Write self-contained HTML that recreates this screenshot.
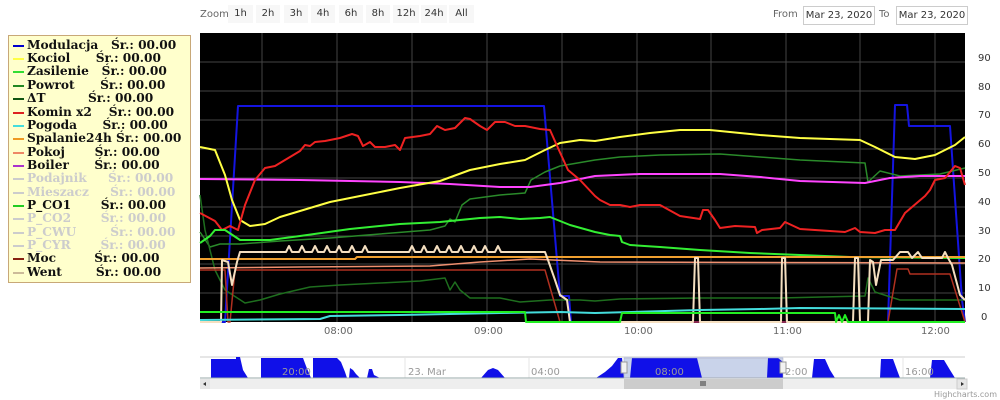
<!DOCTYPE html>
<html><head><meta charset="utf-8"><style>
body{margin:0;width:1000px;height:400px;background:#fff;position:relative;overflow:hidden;font-family:"DejaVu Sans","Liberation Sans",sans-serif}
.btn{position:absolute;top:5px;height:18px;background:#f7f7f7;font-size:10px;color:#333;line-height:18px;text-align:center}
.lbl{position:absolute;font-size:10px;color:#666}
.inp{position:absolute;top:6px;height:17px;border:1px solid #ccc;font-size:10px;color:#333;line-height:17px;text-align:center;background:#fff}
#leg{position:absolute;left:8px;top:35px;width:181px;height:246px;background:#ffffcc;border:1px solid #c8a878;font-family:"DejaVu Serif","Liberation Serif",serif;font-weight:bold;font-size:12.2px}
.r{position:absolute;left:4px;height:13px;line-height:13px;white-space:pre;color:#111}
.r i{display:inline-block;width:11px;height:2px;vertical-align:middle;margin-right:3px}
.g{color:#ccc}
.yl{position:absolute;left:978px;font-size:10px;color:#333}
.xl{position:absolute;top:326px;font-size:10px;color:#666}
</style></head><body>
<div class="lbl" style="left:200px;top:9px">Zoom</div>
<div class="btn" style="left:228px;width:25px">1h</div>
<div class="btn" style="left:256px;width:24px">2h</div>
<div class="btn" style="left:284px;width:24px">3h</div>
<div class="btn" style="left:311px;width:24px">4h</div>
<div class="btn" style="left:339px;width:24px">6h</div>
<div class="btn" style="left:366px;width:24px">8h</div>
<div class="btn" style="left:393px;width:26px">12h</div>
<div class="btn" style="left:421px;width:26px">24h</div>
<div class="btn" style="left:449px;width:25px">All</div>
<div class="lbl" style="left:773px;top:9px">From</div>
<div class="inp" style="left:803px;width:70px">Mar 23, 2020</div>
<div class="lbl" style="left:879px;top:9px">To</div>
<div class="inp" style="left:896px;width:70px">Mar 23, 2020</div>

<div id="leg">
<div class="r" style="top:3px"><i style="background:#0000cc"></i>Modulacja   Śr.: 00.00</div>
<div class="r" style="top:16px"><i style="background:#ffff44"></i>Kociol      Śr.: 00.00</div>
<div class="r" style="top:29px"><i style="background:#33dd33"></i>Zasilenie   Śr.: 00.00</div>
<div class="r" style="top:43px"><i style="background:#228822"></i>Powrot      Śr.: 00.00</div>
<div class="r" style="top:56px"><i style="background:#115511"></i>ΔT          Śr.: 00.00</div>
<div class="r" style="top:70px"><i style="background:#dd2222"></i>Komin x2    Śr.: 00.00</div>
<div class="r" style="top:83px"><i style="background:#44dddd"></i>Pogoda      Śr.: 00.00</div>
<div class="r" style="top:96px"><i style="background:#ee9922"></i>Spalanie24h Śr.: 00.00</div>
<div class="r" style="top:110px"><i style="background:#ee8866"></i>Pokoj       Śr.: 00.00</div>
<div class="r" style="top:123px"><i style="background:#aa33cc"></i>Boiler      Śr.: 00.00</div>
<div class="r g" style="top:136px"><i style="background:#ccc"></i>Podajnik     Śr.: 00.00</div>
<div class="r g" style="top:150px"><i style="background:#ccc"></i>Mieszacz     Śr.: 00.00</div>
<div class="r" style="top:163px"><i style="background:#22cc22"></i>P_CO1       Śr.: 00.00</div>
<div class="r g" style="top:176px"><i style="background:#ccc"></i>P_CO2       Śr.: 00.00</div>
<div class="r g" style="top:190px"><i style="background:#ccc"></i>P_CWU        Śr.: 00.00</div>
<div class="r g" style="top:203px"><i style="background:#ccc"></i>P_CYR       Śr.: 00.00</div>
<div class="r" style="top:216px"><i style="background:#882211"></i>Moc         Śr.: 00.00</div>
<div class="r" style="top:230px"><i style="background:#ccbb99"></i>Went        Śr.: 00.00</div>
</div>

<svg width="1000" height="400" style="position:absolute;left:0;top:0" fill="none">
<rect x="200" y="33" width="765" height="289" fill="#000"/>
<g stroke="#444" stroke-width="1">
<path d="M262 33V322M337 33V322M412 33V322M487 33V322M562 33V322M637 33V322M711 33V322M786 33V322M860 33V322M935 33V322"/>
<path d="M200 62H965M200 91H965M200 120H965M200 149H965M200 178H965M200 207H965M200 236H965M200 264H965M200 293H965"/>
</g>
<g stroke-width="2" stroke-linejoin="round">
<polyline stroke="#1414e0" points="200,322 225,322 238,106 544,106 560,296 569,296 571,322 888,322 895,105 907,105 909,126 950,126 962,300 965,322"/>
<polyline stroke="#2a8a2a" stroke-width="1.5" points="200,232 210,247 220,244 240,244 280,241 330,238 380,234 430,230 445,226 450,219 455,222 462,205 470,199 500,195 525,193 531,180 545,172 560,166 595,160 620,157 660,155 720,154 760,157 800,160 865,163 868,182 880,171 900,176 940,174 965,168"/>
<polyline stroke="#1e6e1e" stroke-width="1.5" points="200,195 205,230 215,270 225,290 245,303 260,300 280,294 310,287 340,285 380,283 420,281 445,278 450,290 455,282 460,290 470,298 500,298 520,302 550,300 580,300 595,301 620,299 700,298 780,298 865,296 868,278 875,292 900,300 965,300"/>
<polyline stroke="#ff44ff" points="200,179 300,180 400,182 450,184 500,187 530,187 560,183 595,176 640,174 720,174 760,177 800,181 865,183 890,178 920,176 965,176"/>
<polyline stroke="#ffff44" points="200,147 215,150 225,175 232,200 240,220 250,226 265,224 280,217 300,211 330,202 360,196 400,188 440,181 470,170 500,164 525,160 545,150 560,143 580,140 595,141 620,137 650,133 680,130 710,130 760,135 800,138 860,140 875,147 895,157 915,159 935,155 955,145 965,137"/>
<polyline stroke="#ee2222" points="200,213 215,221 222,230 230,226 238,230 245,205 255,180 265,168 275,166 285,160 300,151 305,145 310,146 315,142 325,141 340,138 352,134 358,136 363,146 370,142 375,147 385,147 395,145 400,150 405,138 420,136 430,134 437,126 445,130 455,128 465,118 470,119 480,126 487,130 495,122 505,122 515,126 525,126 540,129 550,130 558,148 568,170 580,180 595,196 600,200 610,205 620,205 630,207 640,205 660,205 680,216 700,219 703,210 708,210 715,220 720,228 735,226 755,227 757,233 762,230 780,228 785,222 800,229 830,231 845,232 855,228 860,232 875,233 885,230 895,230 905,213 925,196 930,190 935,180 945,178 955,166 960,168 965,185"/>
<polyline stroke="#33ee33" points="200,243 210,236 215,230 225,230 240,240 270,240 300,236 350,229 400,224 440,222 480,218 500,217 520,219 540,218 550,217 570,225 595,232 610,235 620,236 622,242 630,245 660,247 700,250 750,253 800,255 850,257 965,258"/>
<polyline stroke="#f0a030" points="200,259 355,259 357,257 965,257"/>
<polyline stroke="#f09070" stroke-width="1.5" points="200,268 300,267 430,266 480,262 530,259 600,262 965,263"/>
<polyline stroke="#b03020" stroke-width="1.5" points="200,270 225,270 228,322 230,322 235,270 545,270 560,322 888,322 897,269 908,269 910,274 950,274 965,322"/>
<polyline stroke="#f5dfc0" points="200,322 221,322 222,260 228,262 232,285 237,262 240,252 286,252 289,246 292,252 299,252 302,246 305,252 312,252 315,246 318,252 324,252 327,246 330,252 336,252 339,246 342,252 349,252 352,246 355,252 362,252 365,246 368,252 409,252 412,246 415,252 421,252 424,246 427,252 434,252 437,246 440,252 446,252 449,246 452,252 458,252 461,246 464,252 471,252 474,246 477,252 482,252 485,246 488,252 495,252 498,246 501,252 545,252 548,260 555,280 560,295 567,300 570,322 693,322 695,258 698,258 700,322 781,322 782,258 785,258 787,322 853,322 855,258 858,258 860,322 868,322 870,260 873,262 876,285 881,260 893,260 900,252 908,252 912,258 918,252 922,258 942,258 945,252 948,258 952,265 960,295 965,300"/>
<polyline stroke="#44dddd" points="200,320 320,319 330,316 400,315 500,313 560,312 595,313 700,310 760,309 800,308 965,309"/>
<polyline stroke="#22ee22" points="200,312 525,312 526,322 620,322 622,313 835,313 836,322 839,315 842,322 845,315 848,322 965,322"/>
</g>
<!-- navigator -->
<path d="M200 357H965" stroke="#ccc"/>
<g stroke="#e6e6e6"><path d="M405 357V378M529 357V378M654 357V378M778 357V378M903 357V378"/></g>
<rect x="624" y="357" width="159" height="21" fill="#c9d3ea"/>
<path fill="#1010e8" d="M211 378V359H236V357H240L243 370L248 378ZM261 378V358H303L306 366L311 378ZM313 378V358H337L341 362L345 372L347 378ZM349 378L350 368L353 370L356 374L360 378ZM367 378L369 369L372 369L374 375L380 378ZM481 378L488 370L493 368L498 370L505 378ZM596 378L605 372L612 366L618 358L622 358L624 378ZM630 378L632 358H697L702 378ZM767 378L768 358H778L783 362L783 378ZM812 378L814 359H825L830 370L835 378ZM880 378L881 359H893L897 370L900 378ZM930 378L932 360H944L950 370L955 378Z"/>
<path d="M200 378H965" stroke="#9aa" stroke-width="1"/>
<rect x="624" y="358" width="159" height="20" fill="none" stroke="#aab" stroke-width="0.5"/>
<rect x="621" y="362" width="6" height="11" fill="#f2f2f2" stroke="#999"/>
<rect x="780" y="362" width="6" height="11" fill="#f2f2f2" stroke="#999"/>
<rect x="200" y="379" width="767" height="10" fill="#eee"/>
<rect x="624" y="379" width="159" height="10" fill="#ccc"/>
<rect x="200" y="379" width="10" height="10" fill="#e6e6e6"/>
<rect x="957" y="379" width="10" height="10" fill="#e6e6e6" stroke="#ccc"/>
<path d="M206 382L203 384L206 386Z M961 382L964 384L961 386Z" fill="#333"/>
<path d="M701 381V386M703 381V386M705 381V386" stroke="#333"/>
<g font-family="DejaVu Sans,sans-serif" font-size="10" fill="#999">
<text x="282" y="375">20:00</text><text x="408" y="375">23. Mar</text><text x="531" y="375">04:00</text><text x="655" y="375">08:00</text><text x="785" y="375">2:00</text><text x="905" y="375">16:00</text>
</g>
<text x="997" y="397" font-family="DejaVu Sans,sans-serif" font-size="8" fill="#999" text-anchor="end">Highcharts.com</text>
</svg>
<div class="yl" style="top:53px">90</div><div class="yl" style="top:82px">80</div><div class="yl" style="top:110px">70</div><div class="yl" style="top:139px">60</div><div class="yl" style="top:168px">50</div><div class="yl" style="top:197px">40</div><div class="yl" style="top:226px">30</div><div class="yl" style="top:254px">20</div><div class="yl" style="top:283px">10</div><div class="yl" style="top:312px;left:981px">0</div>
<div class="xl" style="left:324px">08:00</div><div class="xl" style="left:474px">09:00</div><div class="xl" style="left:624px">10:00</div><div class="xl" style="left:773px">11:00</div><div class="xl" style="left:921px">12:00</div>
</body></html>
